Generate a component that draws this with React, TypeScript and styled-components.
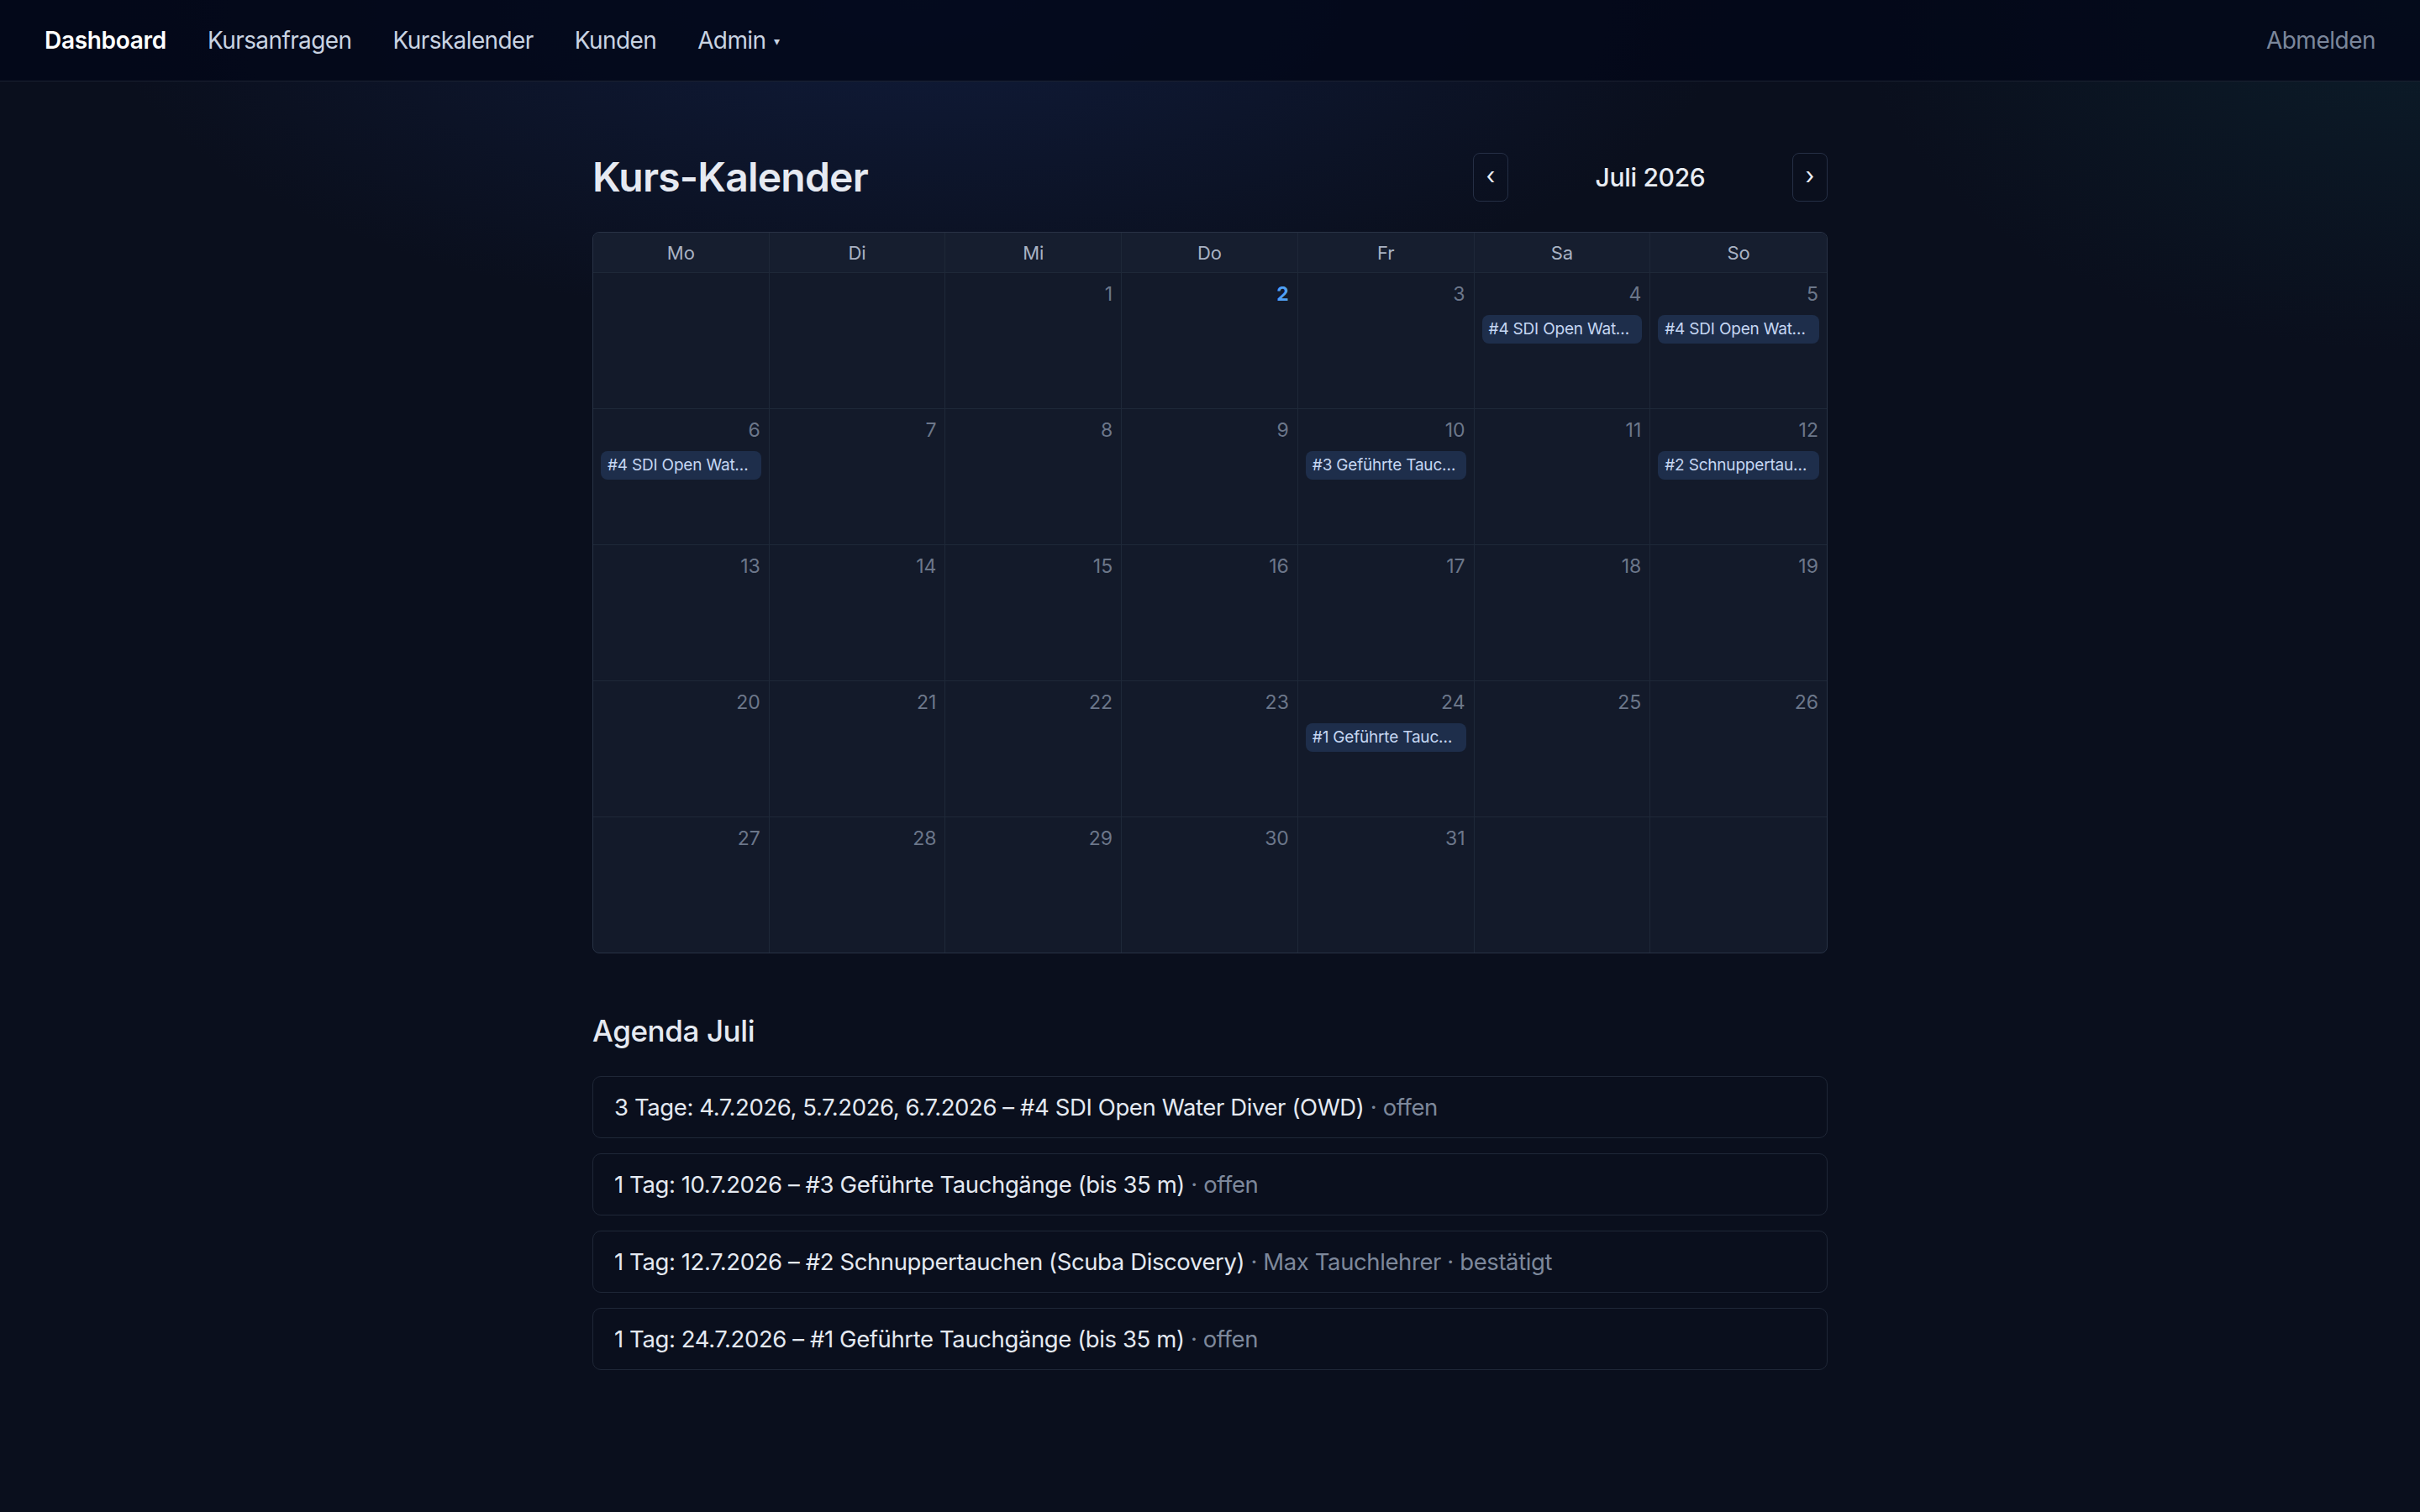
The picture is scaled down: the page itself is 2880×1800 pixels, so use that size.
import styled, { createGlobalStyle } from 'styled-components'

const GlobalStyle = createGlobalStyle`
  * {
    box-sizing: border-box;
  }
  html,
  body {
    margin: 0;
    padding: 0;
  }
  body {
    min-height: 1800px;
    font-family: Inter, 'Noto Sans', 'Liberation Sans', sans-serif;
    color: #e5e9f0;
    background:
      radial-gradient(ellipse 1300px 520px at 38% 0%, rgba(29, 54, 120, 0.32), transparent 75%),
      radial-gradient(ellipse 900px 560px at 100% 0%, rgba(18, 78, 86, 0.22), transparent 75%),
      #0a0f1d;
  }
`

type CourseEvent = { day: number; label: string }

const events: CourseEvent[] = [
  { day: 4, label: '#4 SDI Open Water Diver (OWD)' },
  { day: 5, label: '#4 SDI Open Water Diver (OWD)' },
  { day: 6, label: '#4 SDI Open Water Diver (OWD)' },
  { day: 10, label: '#3 Geführte Tauchgänge (bis 35 m)' },
  { day: 12, label: '#2 Schnuppertauchen (Scuba Discovery)' },
  { day: 24, label: '#1 Geführte Tauchgänge (bis 35 m)' },
]

const agenda = [
  {
    main: '3 Tage: 4.7.2026, 5.7.2026, 6.7.2026 – #4 SDI Open Water Diver (OWD)',
    meta: 'offen',
  },
  { main: '1 Tag: 10.7.2026 – #3 Geführte Tauchgänge (bis 35 m)', meta: 'offen' },
  {
    main: '1 Tag: 12.7.2026 – #2 Schnuppertauchen (Scuba Discovery)',
    meta: 'Max Tauchlehrer · bestätigt',
  },
  { main: '1 Tag: 24.7.2026 – #1 Geführte Tauchgänge (bis 35 m)', meta: 'offen' },
]

const weekdays = ['Mo', 'Di', 'Mi', 'Do', 'Fr', 'Sa', 'So']

// July 2026 starts on a Wednesday
const FIRST_OFFSET = 2
const DAYS_IN_MONTH = 31
const TODAY = 2

const buildCells = () => {
  const cells: (number | null)[] = []
  for (let i = 0; i < FIRST_OFFSET; i++) cells.push(null)
  for (let d = 1; d <= DAYS_IN_MONTH; d++) cells.push(d)
  while (cells.length % 7 !== 0) cells.push(null)
  return cells
}

const App = () => {
  const cells = buildCells()

  return (
    <>
      <GlobalStyle />
      <NavBar>
        <NavLinks>
          <NavLink $active>Dashboard</NavLink>
          <NavLink>Kursanfragen</NavLink>
          <NavLink>Kurskalender</NavLink>
          <NavLink>Kunden</NavLink>
          <NavLink>
            Admin <Caret>▾</Caret>
          </NavLink>
        </NavLinks>
        <LogoutLink>Abmelden</LogoutLink>
      </NavBar>

      <Main>
        <HeaderRow>
          <Title>Kurs-Kalender</Title>
          <MonthNav>
            <NavButton aria-label="Vorheriger Monat">‹</NavButton>
            <MonthLabel>Juli 2026</MonthLabel>
            <NavButton aria-label="Nächster Monat">›</NavButton>
          </MonthNav>
        </HeaderRow>

        <Calendar>
          {weekdays.map((w, i) => (
            <WeekdayCell key={w} $last={i === 6}>
              {w}
            </WeekdayCell>
          ))}
          {cells.map((day, i) => (
            <DayCell key={i} $last={i % 7 === 6} $bottom={i >= cells.length - 7}>
              {day !== null && (
                <>
                  <DayNumber $today={day === TODAY}>{day}</DayNumber>
                  {events
                    .filter((e) => e.day === day)
                    .map((e) => (
                      <EventChip key={e.label} title={e.label}>
                        {e.label}
                      </EventChip>
                    ))}
                </>
              )}
            </DayCell>
          ))}
        </Calendar>

        <AgendaTitle>Agenda Juli</AgendaTitle>
        <AgendaList>
          {agenda.map((item) => (
            <AgendaItem key={item.main}>
              {item.main}
              <Meta> · {item.meta}</Meta>
            </AgendaItem>
          ))}
        </AgendaList>
      </Main>
    </>
  )
}

export default App

const NavBar = styled.nav`
  display: flex;
  align-items: center;
  justify-content: space-between;
  height: 97px;
  padding: 0 53px;
  background: rgba(3, 7, 24, 0.82);
  border-bottom: 1px solid #1b2131;
`

const NavLinks = styled.div`
  display: flex;
  align-items: center;
  gap: 49px;
`

const NavLink = styled.a<{ $active?: boolean }>`
  font-size: 28px;
  font-weight: ${(p) => (p.$active ? 600 : 400)};
  color: ${(p) => (p.$active ? '#ffffff' : '#c9d3e2')};
  letter-spacing: ${(p) => (p.$active ? '-0.3px' : '-0.6px')};
  cursor: pointer;
  display: flex;
  align-items: center;
`

const Caret = styled.span`
  font-size: 14px;
  margin-left: 10px;
  color: #c9d3e2;
`

const LogoutLink = styled.a`
  font-size: 28px;
  color: #7b879c;
  letter-spacing: -0.5px;
  cursor: pointer;
`

const Main = styled.main`
  width: 1470px;
  margin: 0 auto;
  padding: 84px 0 120px;
`

const HeaderRow = styled.div`
  display: flex;
  align-items: center;
  justify-content: space-between;
  margin-bottom: 36px;
`

const Title = styled.h1`
  margin: 0;
  font-size: 48px;
  font-weight: 600;
  letter-spacing: -0.8px;
  color: #e6eaf2;
`

const MonthNav = styled.div`
  display: flex;
  align-items: center;
  gap: 16px;
`

const NavButton = styled.button`
  width: 42px;
  height: 58px;
  display: flex;
  align-items: center;
  justify-content: center;
  padding: 0 0 4px;
  background: transparent;
  border: 1px solid #252f45;
  border-radius: 8px;
  color: #e9edf4;
  font-family: inherit;
  font-size: 28px;
  cursor: pointer;
`

const MonthLabel = styled.div`
  width: 306px;
  text-align: center;
  font-size: 30px;
  font-weight: 500;
  letter-spacing: -0.3px;
  color: #e8ecf3;
`

const Calendar = styled.div`
  display: grid;
  grid-template-columns: repeat(7, 1fr);
  border: 1px solid #283245;
  border-radius: 8px;
  overflow: hidden;
  background: #131a2a;
`

const WeekdayCell = styled.div<{ $last?: boolean }>`
  height: 48px;
  display: flex;
  align-items: center;
  justify-content: center;
  background: #161e2f;
  border-right: ${(p) => (p.$last ? 'none' : '1px solid #1e2838')};
  border-bottom: 1px solid #1e2838;
  font-size: 22px;
  color: #a9b3c4;
`

const DayCell = styled.div<{ $last?: boolean; $bottom?: boolean }>`
  height: ${(p) => (p.$bottom ? '161px' : '162px')};
  display: flex;
  flex-direction: column;
  padding: 10px 9px 0;
  border-right: ${(p) => (p.$last ? 'none' : '1px solid #1e2838')};
  border-bottom: ${(p) => (p.$bottom ? 'none' : '1px solid #1e2838')};
  min-width: 0;
`

const DayNumber = styled.div<{ $today?: boolean }>`
  text-align: right;
  padding-right: 1px;
  font-size: 23px;
  line-height: 30px;
  font-weight: ${(p) => (p.$today ? 700 : 400)};
  color: ${(p) => (p.$today ? '#4fa0f5' : '#6c778a')};
`

const EventChip = styled.div`
  margin-top: 10px;
  height: 34px;
  line-height: 34px;
  padding: 0 8px;
  border-radius: 8px;
  background: #1e2e4b;
  color: #c5d6f2;
  font-size: 19px;
  letter-spacing: -0.2px;
  white-space: nowrap;
  overflow: hidden;
  text-overflow: ellipsis;
`

const AgendaTitle = styled.h2`
  margin: 72px 0 33px;
  font-size: 35px;
  line-height: 41px;
  font-weight: 500;
  letter-spacing: -0.4px;
  color: #e6eaf2;
`

const AgendaList = styled.div`
  display: flex;
  flex-direction: column;
  gap: 18px;
`

const AgendaItem = styled.div`
  height: 74px;
  display: flex;
  align-items: center;
  padding: 0 25px;
  border: 1px solid #1f2737;
  border-radius: 10px;
  font-size: 27.5px;
  color: #e4e9f1;
  white-space: pre;
  letter-spacing: -0.4px;
`

const Meta = styled.span`
  color: #7d889b;
`
